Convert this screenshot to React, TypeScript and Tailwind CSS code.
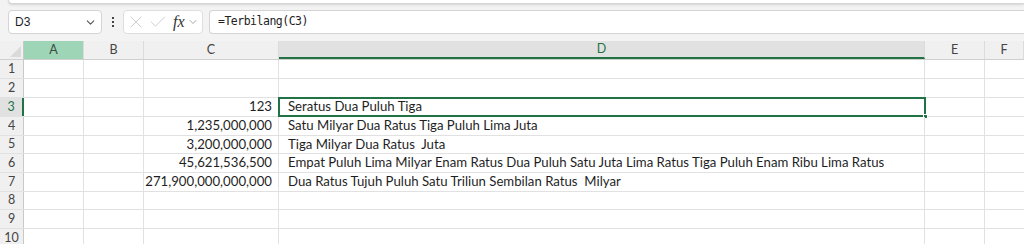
import { ChevronDown, X, Check } from 'lucide-react';

const cols = [
  { key: 'A', w: 'w-[60px]' },
  { key: 'B', w: 'w-[60px]' },
  { key: 'C', w: 'w-[135px]' },
  { key: 'D', w: 'w-[646px]' },
  { key: 'E', w: 'w-[60px]' },
  { key: 'F', w: 'flex-1' },
];

const rows: { n: number; h: string; c?: string; d?: string }[] = [
  { n: 1, h: 'h-[19px]' },
  { n: 2, h: 'h-[19px]' },
  { n: 3, h: 'h-[19px]', c: '123', d: 'Seratus Dua Puluh Tiga' },
  { n: 4, h: 'h-[19px]', c: '1,235,000,000', d: 'Satu Milyar Dua Ratus Tiga Puluh Lima Juta' },
  { n: 5, h: 'h-[18px]', c: '3,200,000,000', d: 'Tiga Milyar Dua Ratus  Juta' },
  { n: 6, h: 'h-[19px]', c: '45,621,536,500', d: 'Empat Puluh Lima Milyar Enam Ratus Dua Puluh Satu Juta Lima Ratus Tiga Puluh Enam Ribu Lima Ratus' },
  { n: 7, h: 'h-[19px]', c: '271,900,000,000,000', d: 'Dua Ratus Tujuh Puluh Satu Triliun Sembilan Ratus  Milyar' },
  { n: 8, h: 'h-[18px]' },
  { n: 9, h: 'h-[19px]' },
  { n: 10, h: 'h-[19px]' },
];

export default function App() {
  return (
    <div className="w-[1024px] h-[244px] overflow-hidden bg-[#f3f3f3] font-['Lato','Noto_Sans',sans-serif] text-[#1f1f1f]">
      {/* ribbon tail */}
      <div className="ml-[8px] h-[4px] bg-white rounded-bl-[6px] border-b border-l border-[#d6d6d6] shadow-sm" />

      {/* formula bar */}
      <div className="flex items-center h-[24px] mt-[6px] pl-[8px] gap-[6px]">
        <div className="w-[94px] h-[24px] bg-white border border-[#d4d4d4] rounded-[4px] flex items-center justify-between pl-[6px] pr-[4px]">
          <span className="text-[12px] font-['Liberation_Sans',sans-serif]">D3</span>
          <ChevronDown className="w-[13px] h-[13px] text-[#555]" strokeWidth={2} />
        </div>
        <div className="w-[9px] flex flex-col items-center gap-[2px]">
          <span className="w-[2px] h-[2px] bg-[#444]" />
          <span className="w-[2px] h-[2px] bg-[#444]" />
          <span className="w-[2px] h-[2px] bg-[#444]" />
        </div>
        <div className="w-[80px] h-[24px] bg-white border border-[#dedede] rounded-[4px] flex items-center pl-[2px] gap-[2px]">
          <X className="w-[20px] h-[20px] text-[#c4c4c4]" strokeWidth={1} />
          <Check className="w-[20px] h-[20px] text-[#c4c4c4]" strokeWidth={1} />
          <span className="ml-[3px] text-[16px] italic font-['Liberation_Serif',serif] text-[#333] leading-none">fx</span>
          <ChevronDown className="w-[12px] h-[12px] text-[#888]" strokeWidth={1.5} />
        </div>
        <div className="flex-1 h-[24px] bg-white border border-[#d4d4d4] border-r-0 rounded-l-[4px] flex items-center pl-[8px]">
          <span className="text-[11.5px] tracking-[-0.5px] font-['DejaVu_Sans_Mono',monospace] text-[#222]">=Terbilang(C3)</span>
        </div>
      </div>

      {/* sheet */}
      <div className="mt-[7px] bg-white">
        {/* column headers */}
        <div className="flex h-[19px] bg-[#f0f0f0] border-b border-[#cfcfcf]">
          <div className="w-[24px] relative border-r border-[#c8c8c8]">
            <div className="absolute right-[2px] bottom-[2px] w-0 h-0 border-l-[11px] border-l-transparent border-b-[11px] border-b-[#dadada]" />
          </div>
          {cols.map((c) => (
            <div
              key={c.key}
              className={`${c.w} flex items-center justify-center text-[12.5px] border-r border-[#dcdcdc] ${
                c.key === 'A'
                  ? 'bg-[#9fd5b7] text-[#3b4b42]'
                  : c.key === 'D'
                  ? 'bg-[#e1e1e1] text-[#217346] border-b-2 border-b-[#217346]'
                  : 'text-[#444]'
              }`}
            >
              {c.key}
            </div>
          ))}
        </div>

        {rows.map((r) => (
          <div key={r.n} className={`flex ${r.h} border-b border-[#e1e1e1]`}>
            <div
              className={`w-[24px] flex items-center justify-center text-[12.5px] ${
                r.n === 3
                  ? 'bg-[#e1e1e1] text-[#217346] border-r-2 border-[#217346]'
                  : 'bg-[#f0f0f0] text-[#444] border-r border-[#c8c8c8]'
              }`}
            >
              {r.n}
            </div>
            <div className="w-[60px] border-r border-[#e1e1e1]" />
            <div className="w-[60px] border-r border-[#e1e1e1]" />
            <div className="w-[135px] border-r border-[#e1e1e1] flex items-center justify-end pr-[6px] text-[13.2px] whitespace-nowrap">
              {r.c}
            </div>
            <div
              className={`w-[646px] flex items-center pl-[9px] text-[13.2px] whitespace-pre relative ${
                r.n === 3 ? 'outline-2 outline-[#217346] -outline-offset-1' : 'border-r border-[#e1e1e1]'
              }`}
            >
              {r.d}
              {r.n === 3 && (
                <span className="absolute -right-[3px] -bottom-[3px] w-[5px] h-[5px] bg-[#217346] border border-white" />
              )}
            </div>
            <div className="w-[60px] border-r border-[#e1e1e1]" />
            <div className="flex-1" />
          </div>
        ))}
      </div>
    </div>
  );
}
